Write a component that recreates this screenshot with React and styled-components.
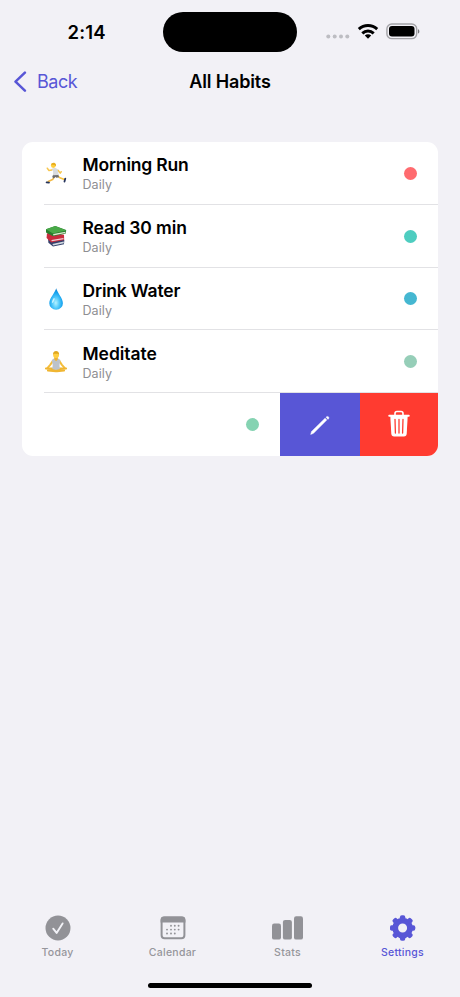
import React from 'react'
import styled, { createGlobalStyle } from 'styled-components'

const habits = [
  { title: 'Morning Run', Icon: RunnerIcon, color: '#ff6b6f', spacing: '-0.18px' },
  { title: 'Read 30 min', Icon: BooksIcon, color: '#4ecdc0', spacing: '-0.08px' },
  { title: 'Drink Water', Icon: DropIcon, color: '#45b7d1', spacing: '-0.18px' },
  { title: 'Meditate', Icon: MeditateIcon, color: '#96ceb8', spacing: '-0.05px' },
]

const tabs = [
  { label: 'Today', Icon: TodayIcon },
  { label: 'Calendar', Icon: CalendarIcon },
  { label: 'Stats', Icon: StatsIcon },
  { label: 'Settings', Icon: SettingsIcon, active: true },
]

function RunnerIcon() {
  return (
    <svg width="24" height="24" viewBox="0 0 24 24" fill="none" strokeLinecap="round" strokeLinejoin="round">
      <path d="M10.8 14.8 8.6 18.6 4.2 20.6" stroke="#f4b942" strokeWidth="1.6" />
      <path d="M13.4 14.8 16.5 17.1 20.4 18.6" stroke="#f9c33f" strokeWidth="1.6" />
      <path d="M2.6 21.4 5 21.7M21.3 17.6 20.5 20.6" stroke="#26345c" strokeWidth="1.8" />
      <path d="M9.2 13.6 14.2 13.2 15.1 16.2 12.4 16.7 11.4 15.9 9.8 17.4 8.2 16Z" fill="#6f6d6d" />
      <path d="M7.6 7.7 11 6.8 14.8 8.7 14.2 14 9.1 14.2 9.1 10.3Z" fill="#d9dbdd" />
      <path d="M7.8 9 5 9.6 3.3 7.2M14.4 9.6 16.2 12.1 17.2 10.7" stroke="#f7c64e" strokeWidth="1.5" />
      <circle cx="9.3" cy="4.6" r="2.4" fill="#ffce3d" />
      <path d="M7 3.8C7.6 1.5 11 1 12 3.6L11.7 5.6 10.4 4Z" fill="#e8ae1d" />
    </svg>
  )
}

function BooksIcon() {
  return (
    <svg width="24" height="24" viewBox="0 0 24 24" strokeLinejoin="round">
      <path d="M4.1 14.6 7 14 20.3 16 20 20.2 9 22.4 4.4 18.7Z" fill="#34406c" />
      <path d="M8.3 20 19.8 17.4 19.8 19.3 9.3 21.6Z" fill="#cfd8e0" />
      <path d="M2.9 9.6 6 8.5 20 10.8 20.2 16 7.2 18.5 2.6 14Z" fill="#c92b3d" />
      <path d="M7.4 16 19.5 13.9 19.5 15.2 7.8 17.3Z" fill="#eccfd2" />
      <path d="M2 5.3 11.3 2 22.2 6 21.8 9.5 9.1 12.2 2 8.4Z" fill="#287e2d" />
      <path d="M9.1 10 21.5 7.8 21.3 9 9.4 11.4Z" fill="#dfe9d2" />
      <path d="M2 5.3 11.3 2 22.3 6.4 9 9.6Z" fill="#48a948" />
    </svg>
  )
}

function DropIcon() {
  return (
    <svg width="24" height="24" viewBox="0 0 24 24">
      <defs>
        <radialGradient id="drop" cx="48%" cy="68%" r="62%">
          <stop offset="0" stopColor="#b5f1ff" />
          <stop offset=".35" stopColor="#5fd0fc" />
          <stop offset=".75" stopColor="#18a5f0" />
          <stop offset="1" stopColor="#1687d4" />
        </radialGradient>
      </defs>
      <path d="M12.2 1.2C11.3 5.2 5.3 11.2 5.3 16.2a6.8 6.6 0 0 0 13.6 0c0-5-5.8-11-6.7-15Z" fill="url(#drop)" />
      <ellipse cx="9.3" cy="13.5" rx=".9" ry="2.7" transform="rotate(24 9.3 13.5)" fill="#e5fbff" opacity=".8" />
    </svg>
  )
}

function MeditateIcon() {
  return (
    <svg width="24" height="24" viewBox="0 0 24 24" fill="none" strokeLinecap="round" strokeLinejoin="round">
      <path d="M8.8 11 6.4 14.6 3.6 17.8M15.4 11 17.7 14.6 20.6 17.8" stroke="#f4bd3b" strokeWidth="2" />
      <path d="M2 18.5 8 18.6 14 20.8M22 18.5 16 18.6 10 20.8M4 20.5 11.7 21.2M20 20.5 13 21.2" stroke="#f0b632" strokeWidth="2.2" />
      <path d="M10.3 8.2h3.5l2.6 1.8-.9 5 .3 3.9L12 20l-3.7-1.1.4-3.9-.9-5Z" fill="#bcc2ca" />
      <path d="M10.3 6.4h3.5v3l-1.7 1.8-1.8-1.8Z" fill="#eeb232" />
      <rect x="9.2" y="2" width="5.8" height="6" rx="2.8" fill="#ffcf43" />
      <path d="M9.1 4.7c-.4-4.9 6.3-4.9 6 0l-1.2-1h-3.6Z" fill="#e0a71f" />
    </svg>
  )
}

function TodayIcon() {
  return (
    <svg width="26" height="26" viewBox="0 0 26 26" fill="none">
      <circle cx="13" cy="13" r="12.5" fill="#929297" />
      <path d="m8.2 13.7 3.4 4.2 6-9.5" stroke="#f2f2f7" strokeWidth="1.9" strokeLinecap="round" strokeLinejoin="round" />
    </svg>
  )
}

function CalendarIcon() {
  const dots = [
    [11, 10.8], [14.8, 10.8], [18.6, 10.8],
    [7, 14.6], [11, 14.6], [14.8, 14.6], [18.6, 14.6],
    [7, 18.5], [11, 18.5], [14.8, 18.5],
  ]
  return (
    <svg width="26" height="26" viewBox="0 0 26 26">
      <rect x="1.6" y="2.6" width="22.8" height="20.6" rx="3" fill="none" stroke="#929297" strokeWidth="2" />
      <path d="M.6 7.6V5A3.4 3.4 0 0 1 4 1.6h18A3.4 3.4 0 0 1 25.4 5v2.6Z" fill="#929297" />
      {dots.map(([x, y]) => <circle key={`${x}-${y}`} cx={x} cy={y} r=".95" fill="#929297" />)}
    </svg>
  )
}

function StatsIcon() {
  return (
    <svg width="32" height="26" viewBox="0 0 32 26" fill="#929297">
      <rect x="0" y="8.6" width="9" height="16" rx="2.2" />
      <rect x="10.9" y="4.9" width="9" height="19.7" rx="2.2" />
      <rect x="22" y="1.3" width="9" height="23.3" rx="2.2" />
    </svg>
  )
}

function SettingsIcon() {
  return (
    <svg width="26" height="26" viewBox="0 0 26 26" fill="none">
      <g transform="translate(-0.4 0)">
        <circle cx="13" cy="13" r="7.4" stroke="#5856d6" strokeWidth="5.8" />
        {[0, 45, 90, 135, 180, 225, 270, 315].map(angle => (
          <rect key={angle} x="10.3" y="0.3" width="5.4" height="5" rx="1.9" fill="#5856d6" transform={`rotate(${angle} 13 13)`} />
        ))}
      </g>
    </svg>
  )
}

const App = () => {
  return (
    <Screen>
      <GlobalStyle />
      <StatusBar>
        <Time>2:14</Time>
        <Island />
        <StatusIcons>
          <svg width="94" height="20" viewBox="0 0 94 20">
            {[2.3, 8.7, 15, 21.3].map(x => <circle key={x} cx={x} cy="14.4" r="2" fill="#bdbdc2" />)}
            <g fill="none" stroke="#000" strokeWidth="3">
              <path d="M32.8 7.2c5.3-4.8 13.1-4.8 18.4 0" />
              <path d="M36.3 11.3c3.3-3 8.1-3 11.4 0" />
            </g>
            <path d="m38.8 13.5 3.2 3.2 3.2-3.2c-1.8-1.7-4.6-1.7-6.4 0Z" />
            <rect x="60.9" y="2" width="29.8" height="14.6" rx="4.9" fill="none" stroke="#a2a2a6" strokeWidth="1.4" />
            <rect x="63" y="4.1" width="25.5" height="10.5" rx="3" />
            <path d="M92 7.2c1.8.6 1.8 3.8 0 4.4Z" fill="#77777b" />
          </svg>
        </StatusIcons>
      </StatusBar>
      <NavBar>
        <BackButton>
          <svg width="14" height="22" viewBox="0 0 14 22" fill="none">
            <path d="M11.9 1.7 2.5 10.7l9.4 9" stroke="#5856d6" strokeWidth="2.5" strokeLinecap="round" strokeLinejoin="round" />
          </svg>
          Back
        </BackButton>
        <PageTitle>All Habits</PageTitle>
      </NavBar>
      <HabitList>
        {habits.map(({ title, Icon, color, spacing }) => (
          <HabitRow key={title}>
            <Icon />
            <HabitBody>
              <HabitText>
                <HabitTitle $spacing={spacing}>{title}</HabitTitle>
                <Frequency>Daily</Frequency>
              </HabitText>
              <Dot $color={color} />
            </HabitBody>
          </HabitRow>
        ))}
        <SwipedRow>
          <SwipedContent>
            <Dot $color="#85d3b2" />
          </SwipedContent>
          <Action $color="#5856d6" $width="79.5px" aria-label="Edit">
            <svg width="24" height="24" viewBox="0 0 24 24" fill="#fff">
              <path d="m2.7 21.4.9-3L17.1 5.2l1.7 1.7L5.5 20.3Z" stroke="#fff" strokeWidth=".5" strokeLinejoin="round" />
              <path d="m18 4.2.6-.5c1.4-1 3 .6 2 2l-.6.7Z" stroke="#fff" strokeWidth=".4" />
            </svg>
          </Action>
          <Action $color="#ff3b30" $width="78.5px" aria-label="Delete">
            <svg width="24" height="30" viewBox="0 0 24 30" fill="none" strokeLinecap="round">
              <path d="M8 5V3.5q0-2 2-2h4q2 0 2 2V5" stroke="#fff" strokeWidth="1.6" />
              <path d="M2.2 5.7h19.6" stroke="#fff" strokeWidth="1.9" />
              <path d="M3.3 6h17.4l-1 17.8q-.2 2.7-2.8 2.7H7.1q-2.6 0-2.8-2.7Z" fill="#fff" />
              <path d="m8 9.3.4 13.8M12 9.3v13.8M16 9.3l-.4 13.8" stroke="#ff3b30" strokeWidth="1.3" />
            </svg>
          </Action>
        </SwipedRow>
      </HabitList>
      <TabBar>
        {tabs.map(({ label, Icon, active }) => (
          <Tab key={label} $active={active}>
            <Icon />
            {label}
          </Tab>
        ))}
      </TabBar>
      <HomeIndicator />
    </Screen>
  )
}

const GlobalStyle = createGlobalStyle`
  * {
    box-sizing: border-box;
  }
  body {
    margin: 0;
    background: #f2f1f6;
  }
  button {
    border: 0;
    padding: 0;
    background: none;
    font: inherit;
  }
  svg {
    display: block;
    flex: none;
  }
`

const Screen = styled.div`
  width: 460px;
  height: 997px;
  display: flex;
  flex-direction: column;
  overflow: hidden;
  background: #f2f1f6;
  font-family: Inter, "Liberation Sans", sans-serif;
  color: #000;
`

const StatusBar = styled.div`
  display: grid;
  grid-template-columns: 163px 134px 163px;
  height: 52px;
  padding-top: 12px;
`

const Time = styled.div`
  padding: 8px 0 0 67.5px;
  font-size: 18.5px;
  line-height: 24px;
  font-weight: 600;
  letter-spacing: 0.15px;
`

const Island = styled.div`
  height: 40px;
  border-radius: 20px;
  background: #000;
`

const StatusIcons = styled.div`
  padding: 10px 0 0 29px;
`

const NavBar = styled.div`
  display: grid;
  grid-template-columns: 1fr auto 1fr;
  align-items: center;
  height: 60px;
  margin-bottom: 30px;
`

const BackButton = styled.button`
  display: flex;
  align-items: center;
  gap: 10px;
  padding-left: 13px;
  padding-bottom: 1px;
  color: #5856d6;
  font-size: 18px;
  line-height: 24px;
  letter-spacing: -0.45px;
`

const PageTitle = styled.h1`
  margin: 0;
  font-size: 18px;
  line-height: 24px;
  font-weight: 600;
  letter-spacing: -0.15px;
`

const HabitList = styled.div`
  margin: 0 22px;
  border-radius: 11px;
  overflow: hidden;
  background: #fff;
`

const HabitRow = styled.div`
  display: flex;
  align-items: center;
  height: 62.75px;
  margin-left: 22px;
  padding-top: 1px;
  border-bottom: 1px solid #e2e2e5;
`

const HabitBody = styled.div`
  display: flex;
  flex: 1;
  align-items: center;
  justify-content: space-between;
  padding: 0 21.5px 0 14.5px;
`

const HabitText = styled.div`
  padding-top: 2px;
`

const HabitTitle = styled.div`
  font-size: 17.5px;
  line-height: 22px;
  font-weight: 600;
  letter-spacing: ${({ $spacing }) => $spacing};
`

const Frequency = styled.div`
  font-size: 12.5px;
  line-height: 18px;
  letter-spacing: 0.1px;
  color: #8e8e92;
`

const Dot = styled.span`
  width: 13px;
  height: 13px;
  flex: none;
  border-radius: 50%;
  background: ${({ $color }) => $color};
`

const SwipedRow = styled.div`
  display: flex;
  height: 63px;
`

const SwipedContent = styled.div`
  display: flex;
  flex: 1;
  align-items: center;
  justify-content: flex-end;
  padding-right: 21px;
`

const Action = styled.button`
  display: flex;
  align-items: center;
  justify-content: center;
  width: ${({ $width }) => $width};
  background: ${({ $color }) => $color};
`

const TabBar = styled.div`
  display: grid;
  grid-template-columns: repeat(4, 1fr);
  margin-top: auto;
  height: 68px;
`

const Tab = styled.button`
  display: flex;
  flex-direction: column;
  align-items: center;
  gap: 4px;
  color: ${({ $active }) => ($active ? '#5856d6' : '#96969b')};
  font-size: 10.5px;
  line-height: 15px;
  font-weight: 500;
  letter-spacing: 0.25px;
`

const HomeIndicator = styled.div`
  width: 164px;
  height: 5px;
  margin: 0 auto 9px;
  border-radius: 3px;
  background: #000;
`

export default App
